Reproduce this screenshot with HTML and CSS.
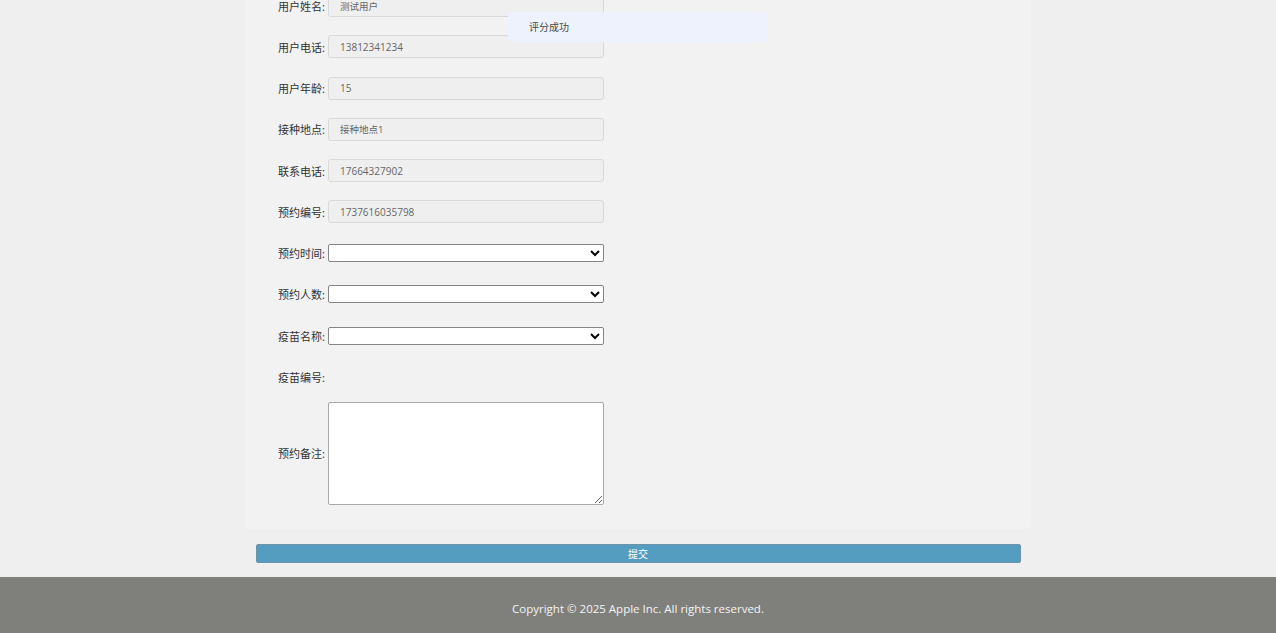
FILE: index.html
```html
<!DOCTYPE html>
<html lang="zh-CN">
<head>
    <meta charset="UTF-8">
    <title>疫苗预约</title>
    <link rel="stylesheet" href="styles.css">
</head>
<body>
    <div class="container">
        <div class="form">
            <div class="row">
                <label>用户姓名:</label>
                <input class="text-input cn" type="text" value="测试用户" disabled>
            </div>
            <div class="row">
                <label>用户电话:</label>
                <input class="text-input" type="text" value="13812341234" disabled>
            </div>
            <div class="row">
                <label>用户年龄:</label>
                <input class="text-input" type="text" value="15" disabled>
            </div>
            <div class="row">
                <label>接种地点:</label>
                <input class="text-input cn" type="text" value="接种地点1" disabled>
            </div>
            <div class="row">
                <label>联系电话:</label>
                <input class="text-input" type="text" value="17664327902" disabled>
            </div>
            <div class="row">
                <label>预约编号:</label>
                <input class="text-input" type="text" value="1737616035798" disabled>
            </div>
            <div class="row">
                <label>预约时间:</label>
                <select class="select-input"><option></option></select>
            </div>
            <div class="row">
                <label>预约人数:</label>
                <select class="select-input"><option></option></select>
            </div>
            <div class="row">
                <label>疫苗名称:</label>
                <select class="select-input"><option></option></select>
            </div>
            <div class="row">
                <label>疫苗编号:</label>
            </div>
            <div class="row row-area">
                <label>预约备注:</label>
                <textarea class="area-input"></textarea>
            </div>
        </div>
    </div>

    <button class="submit-button">提交</button>

    <div class="footer">
        Copyright © 2025 Apple Inc. All rights reserved.
    </div>

    <!-- message toast -->
    <div class="message">评分成功</div>
</body>
</html>
```

FILE: styles.css
```css
body {
    margin: 0;
    padding: 0;
    background-color: #efefef;
    font-family: "Noto Sans", "Noto Sans CJK SC", sans-serif;
    color: #333;
}
.container {
    width: 786px;
    margin: 0 auto;
    background-color: #f2f2f2;
    border-radius: 0 0 5px 5px;
    overflow: hidden;
}
.form {
    margin-top: -15px;
    padding-bottom: 24px;
}
.row {
    display: flex;
    align-items: center;
    min-height: 41.25px;
}
.row label {
    width: 80px;
    margin-right: 3px;
    text-align: right;
    font-size: 11px;
    color: #333;
    white-space: nowrap;
}
.text-input {
    box-sizing: border-box;
    width: 276px;
    height: 23px;
    padding: 0 11px;
    background-color: #efefef;
    border: 1px solid #d9d9d9;
    border-radius: 3px;
    font-family: "Open Sans", "Noto Sans CJK SC", sans-serif;
    font-size: 10px;
    color: #666;
}
.text-input.cn {
    font-size: 9.5px;
}
.select-input {
    box-sizing: border-box;
    width: 276px;
    height: 18px;
    background-color: #fff;
    border: 1px solid #858585;
    border-radius: 2px;
    font-size: 10px;
}
.row-area {
    align-items: center;
    padding-top: 4px;
}
.area-input {
    box-sizing: border-box;
    width: 276px;
    height: 103px;
    background-color: #fff;
    border: 1px solid #a9a9a9;
    border-radius: 2px;
    margin: 0;
}
.submit-button {
    display: block;
    box-sizing: border-box;
    width: 765px;
    height: 19px;
    margin: 15px auto 14px;
    background-color: #559dc0;
    border: 1px solid #6f93a8;
    border-radius: 2px;
    color: #fff;
    font-family: "Noto Sans CJK SC", sans-serif;
    font-size: 10px;
    line-height: 15px;
    padding: 0;
}
.footer {
    height: 56px;
    background-color: #7f807c;
    color: #f4f4f4;
    font-family: "Open Sans", sans-serif;
    font-size: 11.5px;
    text-align: center;
    line-height: 64px;
}
.message {
    position: fixed;
    left: 508px;
    top: 12px;
    width: 260px;
    height: 30px;
    box-sizing: border-box;
    padding-left: 21px;
    background-color: #edf2fc;
    border-radius: 4px;
    font-family: "Noto Sans CJK SC", sans-serif;
    font-size: 10px;
    line-height: 30px;
    color: #4a4a4a;
}
```
